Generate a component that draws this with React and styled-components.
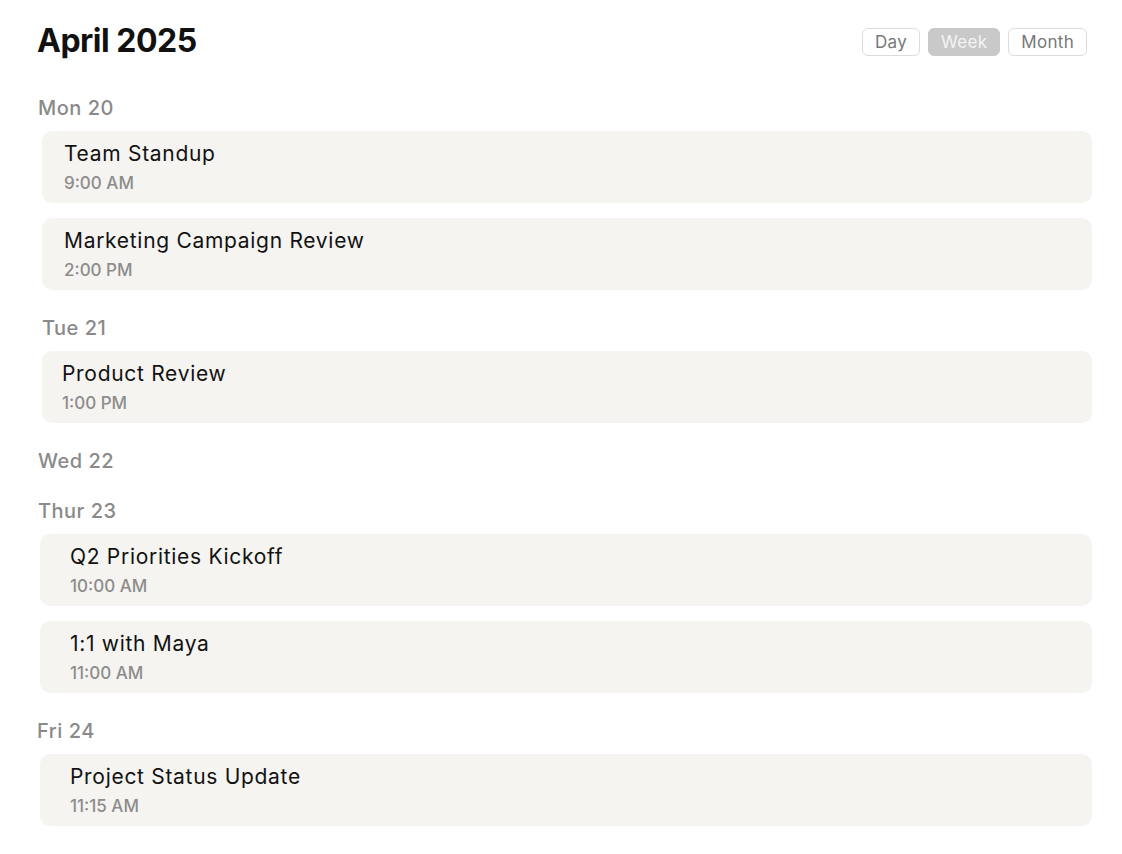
import React from "react";
import styled, { createGlobalStyle } from "styled-components";

const GlobalStyle = createGlobalStyle`
  body {
    margin: 0;
    background: #ffffff;
    font-family: Inter, "Noto Sans", sans-serif;
    color: #111111;
  }
`;

const Page = styled.div`
  padding: 20px 30px 28px 37px;
`;

const Header = styled.header`
  display: flex;
  align-items: center;
  justify-content: space-between;
  height: 40px;
  margin-bottom: 36px;
`;

const Title = styled.h1`
  margin: 0;
  font-size: 32px;
  font-weight: 700;
  letter-spacing: -0.5px;
`;

const ViewSwitch = styled.div`
  display: flex;
  gap: 8px;
  margin: 3px 5px 0 0;
`;

const ViewButton = styled.button`
  height: 28px;
  padding: 0 12px;
  border: 1px solid ${(p) => (p.$active ? "#c9c9c9" : "#dcdcdc")};
  border-radius: 6px;
  background: ${(p) => (p.$active ? "#c9c9c9" : "#ffffff")};
  color: ${(p) => (p.$active ? "#f4f4f4" : "#777777")};
  font-family: inherit;
  font-size: 17px;
  font-weight: 400;
  letter-spacing: 0.3px;
  cursor: pointer;
`;

const Days = styled.div`
  display: flex;
  flex-direction: column;
  gap: 26px;
`;

const Day = styled.section`
  display: flex;
  flex-direction: column;
  gap: 11px;
`;

const DayLabel = styled.div`
  height: 24px;
  line-height: 24px;
  padding-left: ${(p) => p.$indent}px;
  font-size: 20px;
  font-weight: 500;
  letter-spacing: 0.5px;
  color: #8a8a8a;
`;

const Events = styled.div`
  display: flex;
  flex-direction: column;
  gap: 15px;
  padding-left: ${(p) => p.$shift}px;
`;

const Card = styled.div`
  box-sizing: border-box;
  height: 72px;
  padding: 9px 20px 0 ${(p) => p.$pad}px;
  border-radius: 10px;
  background: #f5f4f0;
`;

const EventName = styled.div`
  font-size: 21px;
  line-height: 28px;
  font-weight: 400;
  letter-spacing: 0.7px;
  color: #121212;
`;

const EventTime = styled.div`
  margin-top: 5px;
  font-size: 17px;
  line-height: 21px;
  font-weight: 500;
  color: #8c8c8c;
`;

const schedule = [
  {
    label: "Mon 20",
    indent: 1,
    shift: 5,
    pad: 22,
    events: [
      { name: "Team Standup", time: "9:00 AM" },
      { name: "Marketing Campaign Review", time: "2:00 PM" },
    ],
  },
  {
    label: "Tue 21",
    indent: 5,
    shift: 5,
    pad: 20,
    events: [{ name: "Product Review", time: "1:00 PM" }],
  },
  { label: "Wed 22", indent: 1, shift: 3, pad: 30, events: [] },
  {
    label: "Thur 23",
    indent: 1,
    shift: 3,
    pad: 30,
    events: [
      { name: "Q2 Priorities Kickoff", time: "10:00 AM" },
      { name: "1:1 with Maya", time: "11:00 AM" },
    ],
  },
  {
    label: "Fri 24",
    indent: 0,
    shift: 3,
    pad: 30,
    events: [{ name: "Project Status Update", time: "11:15 AM" }],
  },
];

export default function App() {
  const [view, setView] = React.useState("Week");

  return (
    <Page>
      <GlobalStyle />
      <Header>
        <Title>April 2025</Title>
        <ViewSwitch>
          {["Day", "Week", "Month"].map((v) => (
            <ViewButton key={v} $active={v === view} onClick={() => setView(v)}>
              {v}
            </ViewButton>
          ))}
        </ViewSwitch>
      </Header>

      <Days>
        {schedule.map((day) => (
          <Day key={day.label}>
            <DayLabel $indent={day.indent}>{day.label}</DayLabel>
            {day.events.length > 0 && (
              <Events $shift={day.shift}>
                {day.events.map((ev) => (
                  <Card key={ev.name} $pad={day.pad}>
                    <EventName>{ev.name}</EventName>
                    <EventTime>{ev.time}</EventTime>
                  </Card>
                ))}
              </Events>
            )}
          </Day>
        ))}
      </Days>
    </Page>
  );
}
